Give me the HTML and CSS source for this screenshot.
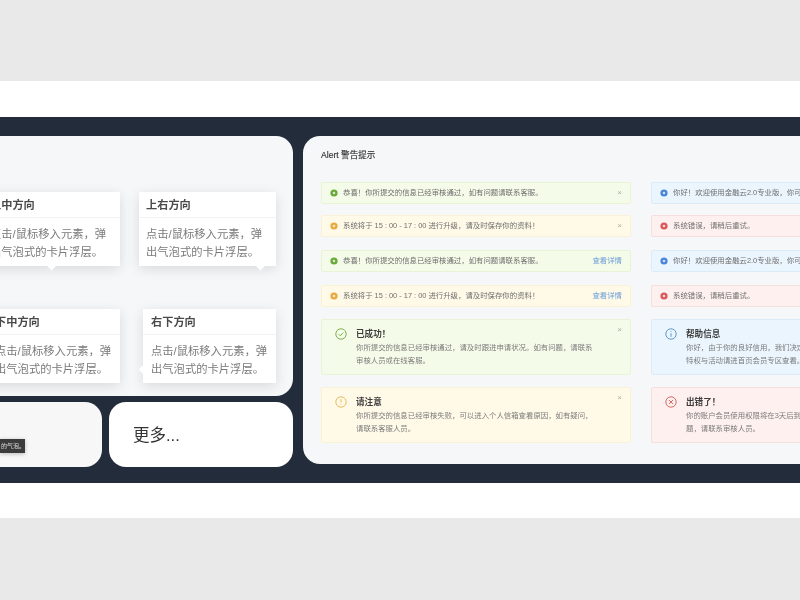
FILE: index.html
```html
<!DOCTYPE html>
<html lang="zh">
<head>
<meta charset="utf-8">
<title>Alert 警告提示</title>
<link rel="stylesheet" href="styles.css">
</head>
<body>
<div class="band-gray top"></div>
<div class="band-white upper"></div>
<main class="stage">
  <section class="left">
    <div class="panel pop-panel">
      <div class="pop-row">
        <div class="pop arrow-bc"><h3>上中方向</h3><p>点击/鼠标移入元素，弹出气泡式的卡片浮层。</p></div>
        <div class="pop arrow-br"><h3>上右方向</h3><p>点击/鼠标移入元素，弹出气泡式的卡片浮层。</p></div>
      </div>
      <div class="pop-row lower">
        <div class="pop shifted"><h3>下中方向</h3><p>点击/鼠标移入元素，弹出气泡式的卡片浮层。</p></div>
        <div class="pop narrow arrow-lb"><h3>右下方向</h3><p>点击/鼠标移入元素，弹出气泡式的卡片浮层。</p></div>
      </div>
    </div>
    <div class="bottom-row">
      <div class="mini"><span class="tip">的气泡。</span></div>
      <div class="more">更多...</div>
    </div>
  </section>
  <section class="panel alerts">
    <h2>Alert 警告提示</h2>
    <div class="cols">
      <div class="col">
        <div class="alert ok"><svg class="dot" viewBox="0 0 10 10"><circle cx="5" cy="5" r="4.5"/><circle class="mk" cx="5" cy="5" r="1.6"/></svg><span class="msg">恭喜！你所提交的信息已经审核通过，如有问题请联系客服。</span><span class="x">×</span></div>
        <div class="alert warn"><svg class="dot" viewBox="0 0 10 10"><circle cx="5" cy="5" r="4.5"/><circle class="mk" cx="5" cy="5" r="1.6"/></svg><span class="msg">系统将于 15 : 00 - 17 : 00 进行升级，请及时保存你的资料！</span><span class="x">×</span></div>
        <div class="alert ok"><svg class="dot" viewBox="0 0 10 10"><circle cx="5" cy="5" r="4.5"/><circle class="mk" cx="5" cy="5" r="1.6"/></svg><span class="msg">恭喜！你所提交的信息已经审核通过，如有问题请联系客服。</span><span class="link">查看详情</span></div>
        <div class="alert warn"><svg class="dot" viewBox="0 0 10 10"><circle cx="5" cy="5" r="4.5"/><circle class="mk" cx="5" cy="5" r="1.6"/></svg><span class="msg">系统将于 15 : 00 - 17 : 00 进行升级，请及时保存你的资料！</span><span class="link">查看详情</span></div>
        <div class="big ok"><svg class="ring" viewBox="0 0 12 12"><circle cx="6" cy="6" r="5.2"/><path d="M3.6 6.1l1.7 1.7 3-3.2"/></svg><div class="big-body"><h4>已成功！</h4><p>你所提交的信息已经审核通过，请及时跟进申请状况。如有问题，请联系审核人员或在线客服。</p></div><span class="x">×</span></div>
        <div class="big warn"><svg class="ring" viewBox="0 0 12 12"><circle cx="6" cy="6" r="5.2"/><path d="M6 3.2v3.4M6 8.1v.7"/></svg><div class="big-body"><h4>请注意</h4><p>你所提交的信息已经审核失败，可以进入个人信箱查看原因，如有疑问，请联系客服人员。</p></div><span class="x">×</span></div>
      </div>
      <div class="col">
        <div class="alert info"><svg class="dot" viewBox="0 0 10 10"><circle cx="5" cy="5" r="4.5"/><circle class="mk" cx="5" cy="5" r="1.6"/></svg><span class="msg">你好！欢迎使用金融云2.0专业版，你可以根据自身需求添加相关服务。</span><span class="x">×</span></div>
        <div class="alert err"><svg class="dot" viewBox="0 0 10 10"><circle cx="5" cy="5" r="4.5"/><circle class="mk" cx="5" cy="5" r="1.6"/></svg><span class="msg">系统错误，请稍后重试。</span><span class="x">×</span></div>
        <div class="alert info"><svg class="dot" viewBox="0 0 10 10"><circle cx="5" cy="5" r="4.5"/><circle class="mk" cx="5" cy="5" r="1.6"/></svg><span class="msg">你好！欢迎使用金融云2.0专业版，你可以根据自身需求添加相关服务。</span><span class="link">查看详情</span></div>
        <div class="alert err"><svg class="dot" viewBox="0 0 10 10"><circle cx="5" cy="5" r="4.5"/><circle class="mk" cx="5" cy="5" r="1.6"/></svg><span class="msg">系统错误，请稍后重试。</span><span class="link">查看详情</span></div>
        <div class="big info"><svg class="ring" viewBox="0 0 12 12"><circle cx="6" cy="6" r="5.2"/><path d="M6 3.1v.8M6 5.2v3.6"/></svg><div class="big-body"><h4>帮助信息</h4><p>你好，由于你的良好信用，我们决定赠送你七天会员体验，更多会员专属特权与活动请进首页会员专区查看。</p></div><span class="x">×</span></div>
        <div class="big err"><svg class="ring" viewBox="0 0 12 12"><circle cx="6" cy="6" r="5.2"/><path d="M4 4l4 4M8 4l-4 4"/></svg><div class="big-body"><h4>出错了！</h4><p>你的账户会员使用权限将在3天后到期，请及时续费以免影响使用。如有问题，请联系审核人员。</p></div><span class="x">×</span></div>
      </div>
    </div>
  </section>
</main>
<div class="band-white lower-band"></div>
<div class="band-gray bottom"></div>
</body>
</html>
```

FILE: styles.css
```css
* { box-sizing: border-box; margin: 0; padding: 0; }
html, body { width: 800px; height: 600px; overflow: hidden; }
body { font-family: "Liberation Sans", "Noto Sans CJK SC", sans-serif; background: #fff; }
.band-gray { background: #e9e9e9; }
.band-gray.top { height: 81px; }
.band-gray.bottom { height: 82px; }
.band-white { background: #fff; }
.band-white.upper { height: 36px; }
.band-white.lower-band { height: 35px; }
.stage { height: 366px; background: #232c3b; padding-top: 19px; display: flex; gap: 10px; overflow: hidden; filter: blur(.5px); }
.left { flex: 0 0 293px; width: 293px; display: flex; flex-direction: column; gap: 6px; }
.panel { background: #f6f7f8; border-radius: 17px; }
.pop-panel { height: 260px; padding: 56px 17px 0 0; overflow: hidden; display: flex; flex-direction: column; gap: 43px; border-radius: 0 17px 17px 0; }
.pop-row { display: flex; justify-content: flex-end; gap: 19px; }
.pop-row.lower { gap: 23px; }
.pop { position: relative; flex: 0 0 137px; height: 74px; background: #fff; box-shadow: 0 3px 12px rgba(0, 0, 0, .12); color: #7a7a7a; }
.pop.narrow { flex-basis: 133px; }
.pop h3 { height: 26px; line-height: 27px; padding-left: 7px; font-size: 11.2px; font-weight: 700; color: #4a4a4a; border-bottom: 1px solid #f3f3f3; }
.pop p { padding: 7px 4px 0 7px; font-size: 11.3px; line-height: 18px; }
.pop.shifted h3, .pop.shifted p { padding-left: 12px; }
.pop.narrow h3, .pop.narrow p { padding-left: 8px; }
.arrow-bc::after, .arrow-br::after, .arrow-lb::after { content: ""; position: absolute; width: 7px; height: 7px; background: #fff; transform: rotate(45deg); }
.arrow-bc::after { bottom: -3px; left: 65px; }
.arrow-br::after { bottom: -3px; right: 12px; }
.arrow-lb::after { left: -3px; bottom: 10px; }
.bottom-row { display: flex; gap: 7px; height: 65px; }
.mini { flex: 0 0 102px; background: #f7f7f8; border-radius: 0 17px 17px 0; display: flex; align-items: flex-end; padding-bottom: 14px; }
.tip { width: 25px; height: 14px; line-height: 14px; background: #3b3b3b; color: #ddd; font-size: 6px; text-align: right; white-space: nowrap; overflow: hidden; box-shadow: 0 1px 4px rgba(0, 0, 0, .25); }
.more { flex: 1; background: #fff; border-radius: 17px; padding: 23px 0 0 24px; font-size: 16.5px; line-height: 20px; color: #333; }
.alerts { flex: 0 0 620px; height: 328px; padding: 13px 0 0 18px; overflow: hidden; }
.alerts h2 { font-size: 8.6px; line-height: 12px; font-weight: 400; color: #333; -webkit-text-stroke: .15px #333; }
.cols { display: flex; gap: 20px; margin-top: 21px; }
.col { flex: 0 0 310px; display: flex; flex-direction: column; }
.alert { height: 22px; margin-bottom: 12px; display: flex; align-items: center; gap: 5px; padding: 0 8px; border-radius: 2px; border: 1px solid; font-size: 7.4px; line-height: 9px; color: #6f6f6f; white-space: nowrap; }
.alert:nth-child(1) { margin-bottom: 11px; }
.alert:nth-child(2) { margin-bottom: 13px; }
.alert:nth-child(3) { margin-bottom: 13px; }
.alert .msg { flex: 1; padding-bottom: 1px; }
.dot { width: 8px; height: 8px; flex: none; }
.mk { fill: #fff; opacity: .75; }
.x { color: #aaa; font-size: 8px; line-height: 8px; }
.link { color: #6d9fd8; padding-bottom: 1px; }
.big { position: relative; height: 55.5px; margin-bottom: 12.5px; padding: 8px 8px 0 13px; display: flex; gap: 9px; border-radius: 2px; border: 1px solid; }
.ok { background: #f5fbe9; border-color: #e9f3d6; }
.warn { background: #fff9e7; border-color: #fbf2d5; }
.info { background: #eaf5fd; border-color: #dbecf8; }
.err { background: #fdf0ee; border-color: #f3dfdc; }
.ok .dot > circle:first-child { fill: #6aaa3a; }
.warn .dot > circle:first-child { fill: #e8aa3d; }
.info .dot > circle:first-child { fill: #4a86d8; }
.err .dot > circle:first-child { fill: #d9585a; }
.ring { width: 12px; height: 12px; flex: none; fill: none; stroke-width: .9; }
.ok .ring { stroke: #6fa83e; }
.warn .ring { stroke: #e6b552; }
.info .ring { stroke: #4f8fc4; }
.err .ring { stroke: #cf5d5a; }
.big-body { width: 242px; flex: none; }
.big h4 { font-size: 8.6px; line-height: 12px; font-weight: 700; color: #3d3d3d; }
.big p { font-size: 7.4px; line-height: 13px; color: #7c7c7c; margin-top: 1px; }
.big .x { position: absolute; top: 6px; right: 8px; }
```
